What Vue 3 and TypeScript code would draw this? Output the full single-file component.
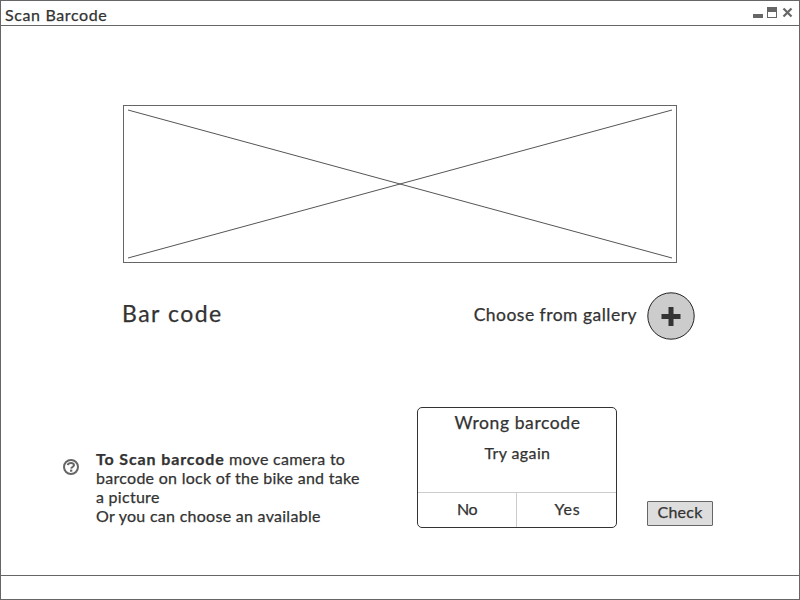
<script setup lang="ts">
import { ref } from 'vue'

const title = ref<string>('Scan Barcode')
const actions: { label: string; kind: string }[] = [
  { label: 'No', kind: 'no' },
  { label: 'Yes', kind: 'yes' },
]
</script>

<template>
  <div class="window">
    <header class="titlebar">
      <h1 class="title">{{ title }}</h1>
      <svg class="controls" width="42" height="14" viewBox="0 0 42 14" aria-hidden="true">
        <rect x="0" y="8" width="10" height="4" fill="#666" />
        <path d="M14 1h10v11h-10z M15 6v5h8v-5z" fill="#666" fill-rule="evenodd" />
        <path d="M30.5 2.5l8 8M38.5 2.5l-8 8" stroke="#666" stroke-width="2.2" fill="none" />
      </svg>
    </header>

    <main class="content">
      <svg class="preview" width="554" height="158" viewBox="0 0 554 158" aria-hidden="true">
        <rect x=".5" y=".5" width="553" height="157" fill="#fff" stroke="#666" />
        <path d="M5 5L549 153M549 5L5 153" stroke="#555" fill="none" />
      </svg>

      <section class="source">
        <h2 class="heading">Bar code</h2>
        <div class="gallery">
          <span class="gallery-label">Choose from gallery</span>
          <button class="add" type="button" aria-label="Add">
            <svg width="48" height="48" viewBox="0 0 48 48">
              <circle cx="24" cy="24" r="23.2" fill="#ccc" stroke="#222" />
              <path d="M24 15v19M14.5 24.5h19" stroke="#333" stroke-width="5" />
            </svg>
          </button>
        </div>
      </section>

      <section class="bottom">
        <div class="help">
          <svg class="help-icon" width="18" height="18" viewBox="0 0 18 18" aria-hidden="true">
            <circle cx="9" cy="9" r="7" fill="none" stroke="#666" stroke-width="2" />
            <path d="M5.8 7.1C6.4 4.4 12.1 4.3 12 7.3C11.9 9 9.3 8.8 9.2 10.6" fill="none" stroke="#666" stroke-width="2" />
            <rect x="8" y="11.6" width="2.3" height="2.1" fill="#666" />
          </svg>
          <p class="help-text">
            <strong>To Scan barcode</strong> move camera to<br />
            barcode on lock of the bike and take<br />
            a picture<br />
            Or you can choose an available
          </p>
        </div>

        <div class="dialog">
          <h3 class="dialog-title">Wrong barcode</h3>
          <p class="dialog-message">Try again</p>
          <div class="dialog-actions">
            <button v-for="a in actions" :key="a.kind" type="button" class="action" :class="a.kind">{{ a.label }}</button>
          </div>
        </div>

        <button class="check" type="button">Check</button>
      </section>
    </main>

    <footer class="statusbar"></footer>
  </div>
</template>

<style>
body {
  margin: 0;
  background: #fff;
}
</style>

<style scoped>
* {
  box-sizing: border-box;
}
.window {
  display: flex;
  flex-direction: column;
  width: 800px;
  height: 600px;
  border: 1px solid #666;
  color: #333;
  font: 400 16px/19px Lato, "Liberation Sans", sans-serif;
  -webkit-text-stroke: 0.25px #333;
}
h1, h2, h3, p {
  margin: 0;
  font-weight: 400;
}
button {
  padding: 0;
  border: 0;
  background: none;
  color: inherit;
  font: inherit;
}
.titlebar {
  display: flex;
  justify-content: space-between;
  height: 25px;
  padding: 4px 4px 0;
  border-bottom: 1px solid #666;
}
.controls {
  margin-top: 1px;
}
.title {
  font-size: 16px;
  line-height: 19px;
  letter-spacing: 0.63px;
}
.content {
  flex: 1;
  padding: 79px 0 0;
}
.preview {
  display: block;
  margin-left: 122px;
}
.source {
  display: flex;
  justify-content: space-between;
  align-items: center;
  height: 48px;
  margin: 29px 104px 0 121px;
}
.heading {
  padding-bottom: 7px;
  font-size: 23px;
  line-height: 28px;
  letter-spacing: 1.5px;
}
.gallery {
  display: flex;
  align-items: center;
  gap: 10px;
}
.gallery-label {
  padding-bottom: 3px;
  font-size: 17.5px;
  letter-spacing: 0.48px;
}
.add {
  width: 48px;
  height: 48px;
}
.add svg {
  display: block;
}
.bottom {
  display: flex;
  align-items: flex-start;
  margin: 67px 0 0 61px;
}
.help {
  display: flex;
  gap: 16px;
  width: 355px;
  padding-top: 42px;
}
.help-icon {
  flex: none;
  margin-top: 9px;
}
.help-text {
  white-space: nowrap;
  letter-spacing: 0.28px;
}
.help-text strong {
  font-weight: 700;
  letter-spacing: 0.87px;
}
.dialog {
  display: flex;
  flex-direction: column;
  width: 200px;
  height: 121px;
  border: 1px solid #333;
  border-radius: 5px;
  text-align: center;
}
.dialog-title {
  padding: 5px 0 0 1px;
  font-size: 17.5px;
  line-height: 20px;
  letter-spacing: 0.6px;
}
.dialog-message {
  padding: 10px 0 0 1px;
  letter-spacing: 0.38px;
}
.dialog-actions {
  display: grid;
  grid-template-columns: 99px 1fr;
  height: 35px;
  margin-top: auto;
  border-top: 1px solid #ccc;
}
.action {
  padding-bottom: 4px;
}
.no {
  border-right: 1px solid #ccc;
  letter-spacing: -0.4px;
}
.yes {
  padding-left: 2px;
  letter-spacing: 0.8px;
}
.check {
  width: 66px;
  height: 25px;
  margin: 94px 0 0 30px;
  padding-bottom: 4px;
  border: 1px solid #666;
  border-radius: 1px;
  background: #ddd;
  letter-spacing: 0.25px;
  line-height: 17px;
}
.statusbar {
  height: 24px;
  border-top: 1px solid #666;
}
</style>
